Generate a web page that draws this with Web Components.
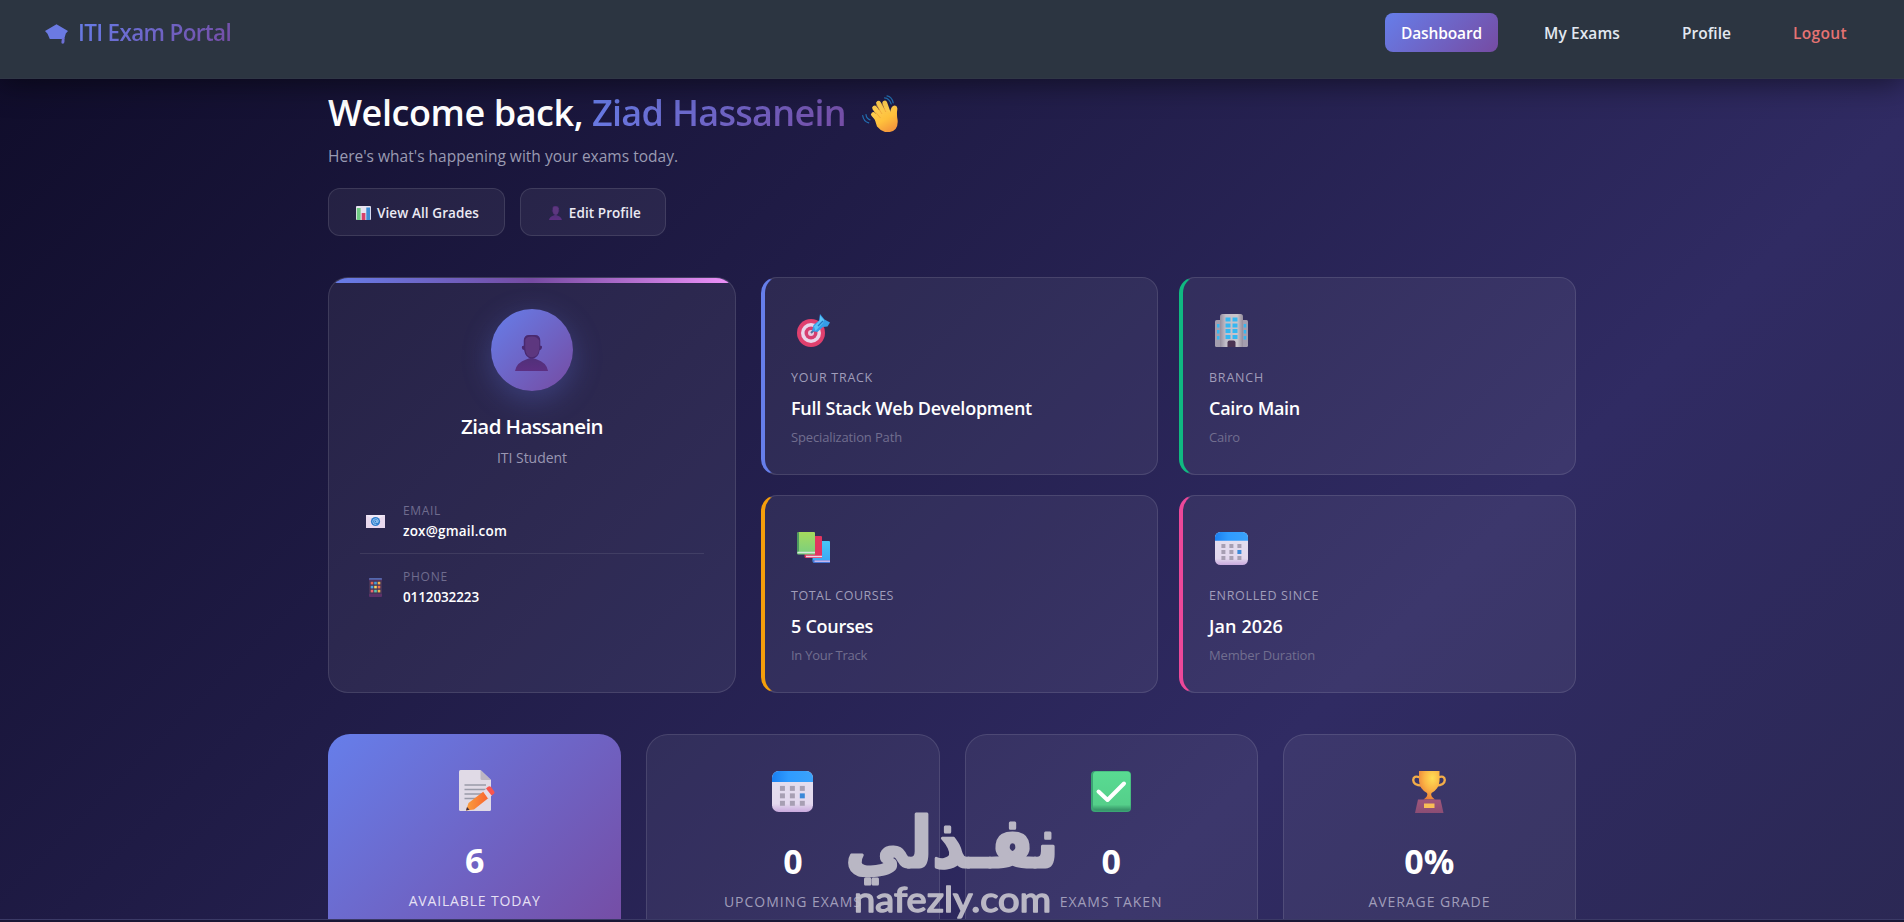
<!DOCTYPE html>
<html lang="en">
<head>
<meta charset="UTF-8">
<title>ITI Exam Portal</title>
<style>
    * { box-sizing: border-box; }
    body {
        margin: 0;
        height: 922px;
        overflow: hidden;
        display: flex;
        flex-direction: column;
        font-family: 'Open Sans', 'Noto Sans', sans-serif;
        color: #fff;
        background: linear-gradient(135deg, #0f0c29 0%, #302b63 50%, #24243e 100%) 0 0 / 1904px 2150px no-repeat;
    }
</style>
</head>
<body>

<nav-bar>
    <span slot="brand"><fit-text width="153">ITI Exam Portal</fit-text></span>
    <nav-link active><fit-text width="81">Dashboard</fit-text></nav-link>
    <nav-link><fit-text width="76">My Exams</fit-text></nav-link>
    <nav-link><fit-text width="49">Profile</fit-text></nav-link>
    <nav-link danger><fit-text width="54">Logout</fit-text></nav-link>
</nav-bar>

<dashboard-page>
    <welcome-header slot="header">
        <fit-text width="264" slot="greeting">Welcome back,&nbsp;</fit-text>
        <fit-text width="254" slot="name">Ziad Hassanein</fit-text>
        <fit-text width="350" slot="subtitle">Here's what's happening with your exams today.</fit-text>
        <action-button slot="actions" icon="chart"><fit-text width="102">View All Grades</fit-text></action-button>
        <action-button slot="actions" icon="user"><fit-text width="72">Edit Profile</fit-text></action-button>
    </welcome-header>

    <profile-card slot="profile">
        <fit-text width="142" slot="name">Ziad Hassanein</fit-text>
        <fit-text width="70" slot="role">ITI Student</fit-text>
        <contact-row icon="email">
            <fit-text width="38" slot="label">EMAIL</fit-text>
            <fit-text width="104" slot="value">zox@gmail.com</fit-text>
        </contact-row>
        <contact-row icon="phone">
            <fit-text width="45" slot="label">PHONE</fit-text>
            <fit-text width="76" slot="value">0112032223</fit-text>
        </contact-row>
    </profile-card>

    <info-card slot="info" icon="target" style="--accent: #667eea">
        <fit-text width="82" slot="label">YOUR TRACK</fit-text>
        <fit-text width="241" slot="value">Full Stack Web Development</fit-text>
        <fit-text width="111" slot="note">Specialization Path</fit-text>
    </info-card>
    <info-card slot="info" icon="building" style="--accent: #10b981">
        <fit-text width="55" slot="label">BRANCH</fit-text>
        <fit-text width="91" slot="value">Cairo Main</fit-text>
        <fit-text width="31" slot="note">Cairo</fit-text>
    </info-card>
    <info-card slot="info" icon="books" style="--accent: #f59e0b">
        <fit-text width="103" slot="label">TOTAL COURSES</fit-text>
        <fit-text width="82" slot="value">5 Courses</fit-text>
        <fit-text width="76" slot="note">In Your Track</fit-text>
    </info-card>
    <info-card slot="info" icon="calendar" style="--accent: #ec4899">
        <fit-text width="110" slot="label">ENROLLED SINCE</fit-text>
        <fit-text width="74" slot="value">Jan 2026</fit-text>
        <fit-text width="106" slot="note">Member Duration</fit-text>
    </info-card>

    <stat-card slot="stats" icon="memo" primary>
        <span slot="number">6</span>
        <fit-text width="132" slot="label">AVAILABLE TODAY</fit-text>
    </stat-card>
    <stat-card slot="stats" icon="calendar">
        <span slot="number">0</span>
        <fit-text width="138" slot="label">UPCOMING EXAMS</fit-text>
    </stat-card>
    <stat-card slot="stats" icon="check">
        <span slot="number">0</span>
        <fit-text width="103" slot="label">EXAMS TAKEN</fit-text>
    </stat-card>
    <stat-card slot="stats" icon="trophy">
        <span slot="number">0%</span>
        <fit-text width="122" slot="label">AVERAGE GRADE</fit-text>
    </stat-card>
</dashboard-page>

<page-edge></page-edge>
<site-watermark></site-watermark>

<script>
const calendarArt = `
    <defs>
        <linearGradient id="top"><stop stop-color="#1a7ff0"/><stop offset=".4" stop-color="#2f9bff"/><stop offset="1" stop-color="#3ba2fb"/></linearGradient>
        <linearGradient id="page" x2="0" y2="1"><stop stop-color="#e4e0ee"/><stop offset=".8" stop-color="#e3d8ee"/><stop offset="1" stop-color="#c9a9dd"/></linearGradient>
    </defs>
    <rect width="33" height="33" rx="5.5" fill="url(#page)"/>
    <path d="M0 8.800V5.500A5.500 5.500 0 0 1 5.500 0h22A5.500 5.500 0 0 1 33 5.500v3.300z" fill="url(#top)"/>
    <g fill="#a79fb3">
        <rect x="6.400" y="12" width="4" height="4"/><rect x="14.400" y="12" width="4" height="4"/><rect x="22.400" y="12" width="4" height="4"/>
        <rect x="6.400" y="18" width="4" height="4"/><rect x="14.400" y="18" width="4" height="4"/><rect x="22.400" y="18" width="4" height="4" fill="#3b88d8"/>
        <rect x="6.400" y="24" width="4" height="4"/><rect x="14.400" y="24" width="4" height="4"/><rect x="22.400" y="24" width="4" height="4"/>
    </g>`;

// name -> [viewBox width, viewBox height, markup]
const icons = {
    cap: [23, 20, `
        <path d="M11.500 0.200L23 7l-2.200 2.600L19.200 15H4.800L2.500 9.800 0 7z" fill="#6b7ae2"/>
        <path d="M17 14h2.500v3.500q0 2.300-1.900 2.300-1.500 0-1.200-1.700z" fill="#6d6fd4"/>`],
    wave: [36, 37, `
        <defs><linearGradient id="skin" x2=".5" y2="1"><stop stop-color="#ffd45a"/><stop offset=".6" stop-color="#ffc13c"/><stop offset="1" stop-color="#f59a3c"/></linearGradient></defs>
        <g fill="none" stroke="#2271b4" stroke-width="1.200" stroke-linecap="round">
            <path d="M22.500 2.800q5 .5 6.700 6.200M25 .8q5 1 6.200 7M.7 20.500q.8 6 6 7.300M4 19.500q.4 4 4 5.400"/>
        </g>
        <g stroke="#ffcd4e" stroke-width="4.800" stroke-linecap="round" fill="none">
            <path d="M23 20L16.500 8.200"/><path d="M26 17L22.800 8"/><path d="M20 23L12.600 13"/><path d="M19 28L11.400 19.500"/>
        </g>
        <path d="M12 22L20 12l8 5.500q1.200-7.300 5-6.900 2.800.4 2.300 4-.8 5 .3 10.500 1 11-9.600 12.200-6 .2-11-5.800z" fill="url(#skin)"/>
        <path d="M14.500 10l5.500 9M19.800 8.500l4 8.500M13.500 17l5 6" stroke="#ed9b35" stroke-width=".6" fill="none"/>`],
    chart: [15, 14, `
        <rect width="15" height="14" rx="1" fill="#e8e3f1"/>
        <rect x=".8" y="2" width="3.800" height="12" fill="#6fca83"/><rect x="5.700" y="7" width="3.700" height="7" fill="#d5416c"/><rect x="10.300" y="1.500" width="3.800" height="12.500" fill="#3d8dd5"/>`],
    user: [34, 37, `
        <defs><linearGradient id="bust" x2="0" y2="1"><stop stop-color="#503079"/><stop offset="1" stop-color="#5d2f82"/></linearGradient></defs>
        <path d="M0 37Q1.500 28 12 24.800L17 23l5 1.800Q32.500 28 34 37z" fill="url(#bust)"/>
        <path d="M9 6Q9 0 14.500 0h6Q26 0 26 6v5q2.500-.5 1.500 2.500-.7 2-2 1.800Q24 24 17.400 24T9.300 15.300q-1.800 0-2.100-1.800Q6.500 10.800 9 11z" fill="#49296f"/>
        <path d="M10.500 5Q12 1.500 17.500 1.600T25 6v7q-.6 9.500-7.500 9.800-6.500 0-7-9.300z" fill="#5d377f"/>`],
    email: [19, 13, `
        <rect width="19" height="13" fill="#e9d9ee"/><path d="M0 0l9.500 6L19 0" fill="#f0e8f6"/>
        <circle cx="9.500" cy="6.500" r="4.600" fill="#2e7ecb"/>
        <path d="M11 5.200v1.900q.2 1 1 .3 1-3.300-2.300-3.700-3 .2-3 3 .2 3 3.600 2.800" fill="none" stroke="#bfe1ff" stroke-width=".7"/><circle cx="9.600" cy="6.500" r="1.200" fill="none" stroke="#bfe1ff" stroke-width=".7"/>`],
    phone: [13, 19, `
        <rect width="13" height="19" rx="1" fill="#5c3168"/><rect y="2.500" width="13" height="13.500" fill="#463457"/><rect width="13" height="1.800" rx=".9" fill="#5368ae"/>
        <rect x="1.700" y="3.800" width="2.600" height="2.600" fill="#e46552"/><rect x="5.200" y="3.800" width="2.600" height="2.600" fill="#439ed8"/><rect x="8.700" y="3.800" width="2.600" height="2.600" fill="#f3b54a"/>
        <rect x="1.700" y="7.800" width="2.600" height="2.600" fill="#4fa5e1"/><rect x="5.200" y="7.800" width="2.600" height="2.600" fill="#f5d75e"/><rect x="8.700" y="7.800" width="2.600" height="2.600" fill="#ed744c"/>
        <rect x="1.700" y="11.800" width="2.600" height="2.600" fill="#ed696d"/><rect x="5.200" y="11.800" width="2.600" height="2.600" fill="#5ac6ab"/><rect x="8.700" y="11.800" width="2.600" height="2.600" fill="#f3b54a"/>`],
    target: [33, 33, `
        <circle cx="14" cy="19" r="14" fill="#e0406e"/><circle cx="14" cy="19" r="10" fill="#ead5ea"/><circle cx="14" cy="19" r="6.500" fill="#d63e70"/><circle cx="14" cy="19" r="3" fill="#e6c9df"/>
        <path d="M14 19L20 13" stroke="#506d9c" stroke-width="2"/>
        <path d="M15 17l1.500-6L22 6.500 23 0 27.500 5.500 33 8.500 30.500 12.500 26 13 20.500 18z" fill="#359ee8"/>
        <path d="M17 12.500L23 6V1.500L27 6l-1 3-7.500 8z" fill="#5bc4f7"/><path d="M21 12L26 7" stroke="#2275c3" stroke-width="1.300"/>`],
    building: [33, 33, `
        <defs><linearGradient id="wall"><stop stop-color="#958e9e"/><stop offset=".25" stop-color="#c2bec8"/><stop offset=".75" stop-color="#c9c4ca"/><stop offset="1" stop-color="#958d9c"/></linearGradient></defs>
        <rect y="6" width="33" height="27" rx="1.500" fill="#a49eae"/><path d="M5 33V2.500Q5 0 7.500 0h18Q28 0 28 2.500V33z" fill="url(#wall)"/>
        <g fill="#35b7f1">
            <rect x="10.500" y="3.500" width="5" height="4"/><rect x="17.500" y="3.500" width="5" height="4"/><rect x="10.500" y="9.500" width="5" height="4"/><rect x="17.500" y="9.500" width="5" height="4"/>
            <rect x="10.500" y="15" width="5" height="4"/><rect x="17.500" y="15" width="5" height="4"/><rect x="10.500" y="21" width="5" height="4"/><rect x="17.500" y="21" width="5" height="4"/>
            <rect x="2" y="10" width="2.500" height="3.500"/><rect x="2" y="16" width="2.500" height="3.500"/><rect x="2" y="22" width="2.500" height="3.500"/>
            <rect x="28.700" y="10" width="2.500" height="3.500"/><rect x="28.700" y="16" width="2.500" height="3.500"/><rect x="28.700" y="22" width="2.500" height="3.500"/>
        </g>
        <path d="M12.500 33v-4.500q0-2 2-2h4q2 0 2 2V33z" fill="#4a3352"/>`],
    books: [33, 33, `
        <defs>
            <linearGradient id="green" x2="0" y2="1"><stop stop-color="#a5d95d"/><stop offset="1" stop-color="#79cf80"/></linearGradient>
            <linearGradient id="blue" x2="0" y2="1"><stop stop-color="#48c6f5"/><stop offset="1" stop-color="#3aa5f4"/></linearGradient>
        </defs>
        <path d="M16 9h16q1 0 1 1v20.500H17q-1.500 0-1.500-1.500z" fill="url(#blue)"/><path d="M16 28h17v3H17.500q-1.500 0-1.500-1.500z" fill="#4677d8"/><path d="M17.500 29.200H33" stroke="#cbbcf0" stroke-width="1.500"/>
        <path d="M8 4h16q1 0 1 1v21H9q-1.500 0-1.500-1.500z" fill="#e2355f"/><path d="M9 24.500H25" stroke="#efd4ea" stroke-width="1.500"/>
        <path d="M2 0h15q1 0 1 1v21.500H1.500Q0 22.500 0 21V2q0-2 2-2z" fill="url(#green)"/><path d="M0 2q0-2 2-2v19.500q-1.500 0-2 1.500z" fill="#4d9a5f"/><path d="M.5 20.500H18" stroke="#d5e6dd" stroke-width="1.500"/>`],
    calendar: [33, 33, calendarArt],
    memo: [36, 41, `
        <defs><linearGradient id="pencil" x2="1"><stop stop-color="#f9a040"/><stop offset="1" stop-color="#f9632e"/></linearGradient></defs>
        <path d="M1.500 0H21.500L32 10v29.500q0 1.500-1.500 1.500h-29Q0 41 0 39.500v-38Q0 0 1.500 0z" fill="#e0dae6"/>
        <path d="M21.500 0L32 10H23q-1.500 0-1.500-1.500z" fill="#bcb5c2"/>
        <path d="M5.500 15H27M5.500 19.500H27M5.500 24H23M5.500 28.500H18" stroke="#999aa8" stroke-width="1.300"/>
        <path d="M7 40.500L9.500 33 24.500 21.500 29.500 28 15 39.500z" fill="url(#pencil)"/><path d="M7 40.500l1-3.500 2.500 2.800z" fill="#413044"/>
        <path d="M24 21.500l3.500-3 5.500 7-4 3z" fill="#e6dce7"/><path d="M27 18.500l2-1.800q1.800-1.200 3.200.5l2.900 4q1 1.600-.4 2.700L32.500 25.500z" fill="#f8554f"/>`],
    check: [40, 41, `
        <defs><linearGradient id="tile" x2="0" y2="1"><stop stop-color="#59db92"/><stop offset=".85" stop-color="#55cf8a"/><stop offset="1" stop-color="#348f66"/></linearGradient></defs>
        <rect width="40" height="41" rx="4" fill="#3ba574"/><rect x="2" y=".5" width="37.500" height="39" rx="3.500" fill="url(#tile)"/>
        <path d="M7.500 20.500L16.500 29 33 12.500" fill="none" stroke="#fff" stroke-width="4" stroke-linecap="round" stroke-linejoin="round"/>`],
    trophy: [34, 42, `
        <defs>
            <radialGradient id="gold" cx=".65" cy=".25" r=".8"><stop stop-color="#ffdf55"/><stop offset=".5" stop-color="#fbb445"/><stop offset="1" stop-color="#e87b3a"/></radialGradient>
            <linearGradient id="base" x2="0" y2="1"><stop stop-color="#a0567a"/><stop offset="1" stop-color="#8b4d74"/></linearGradient>
        </defs>
        <path d="M8 6.500Q1.500 4 1.200 9q.3 5.500 8.800 5.500M26 6.500Q32.500 4 32.800 9q-.3 5.500-8.800 5.500" fill="none" stroke="#f3ad49" stroke-width="2.400"/>
        <path d="M7 0h20.500v10q-.5 8-8 12-1.500 3 3.500 6.500H11.500Q16.500 25 15 22 7.500 18 7 10z" fill="url(#gold)"/>
        <path d="M6 28.500h22.500L31.500 42H3z" fill="url(#base)"/><rect x="12" y="32.500" width="10.500" height="4.500" fill="#f9bd56"/>`],
};

class PortalIcon extends HTMLElement {
    constructor() {
        super();
        const shadow = this.attachShadow({ mode: 'open' });
        const [w, h, art] = icons[this.getAttribute('name')];
        const height = Number(this.getAttribute('height')) || h;
        shadow.innerHTML = `
            <style>
                :host { display: inline-block; line-height: 0; }
            </style>
            <svg width="${w * height / h}" height="${height}" viewBox="0 0 ${w} ${h}">${art}</svg>
        `;
    }
}

class NavBar extends HTMLElement {
    constructor() {
        super();
        const shadow = this.attachShadow({ mode: 'open' });
        shadow.innerHTML = `
            <style>
                :host {
                    display: flex;
                    justify-content: space-between;
                    align-items: flex-start;
                    box-sizing: border-box;
                    height: 79px;
                    flex: none;
                    padding: 13px 41px 0 45px;
                    background: #2c3541;
                    box-shadow: 0 4px 30px rgba(0, 0, 0, 0.5);
                    border-bottom: 1px solid #303746;
                    z-index: 1;
                }
                .brand {
                    display: flex;
                    align-items: center;
                    gap: 10px;
                    height: 39px;
                }
                portal-icon { margin-top: 3px; }
                .title {
                    font-size: 22.5px;
                    font-weight: 600;
                    line-height: 34px;
                    background: linear-gradient(135deg, #667eea, #764ba2);
                    background-clip: text;
                    -webkit-background-clip: text;
                    color: transparent;
                }
                .links { display: flex; gap: 30px; }
            </style>
            <div class="brand">
                <portal-icon name="cap"></portal-icon>
                <div class="title"><slot name="brand"></slot></div>
            </div>
            <div class="links"><slot></slot></div>
        `;
    }
}

class NavLink extends HTMLElement {
    constructor() {
        super();
        const shadow = this.attachShadow({ mode: 'open' });
        shadow.innerHTML = `
            <style>
                :host {
                    display: block;
                    box-sizing: border-box;
                    height: 39px;
                    padding: 1px 16px 0;
                    font-size: 15.5px;
                    font-weight: 600;
                    line-height: 38px;
                    color: #e2e8f0;
                    border-radius: 8px;
                }
                :host([active]) {
                    color: #fff;
                    background: linear-gradient(135deg, #667eea, #764ba2);
                }
                :host([danger]) { color: #e57373; }
            </style>
            <slot></slot>
        `;
    }
}

class DashboardPage extends HTMLElement {
    constructor() {
        super();
        const shadow = this.attachShadow({ mode: 'open' });
        shadow.innerHTML = `
            <style>
                :host {
                    display: flex;
                    flex-direction: column;
                    gap: 41px;
                    box-sizing: border-box;
                    width: 1248px;
                    height: 840px;
                    flex: none;
                    margin: 0 auto;
                    padding-top: 10px;
                    overflow: hidden;
                }
                .overview {
                    display: grid;
                    grid-template-columns: 408px 1fr;
                    gap: 25px;
                    height: 416px;
                    flex: none;
                }
                .info {
                    display: grid;
                    grid-template-columns: 1fr 1fr;
                    grid-template-rows: 1fr 1fr;
                    gap: 20px 21px;
                }
                .stats {
                    display: grid;
                    grid-template-columns: repeat(4, 1fr);
                    gap: 25px;
                    flex: none;
                }
            </style>
            <slot name="header"></slot>
            <div class="overview">
                <slot name="profile"></slot>
                <div class="info"><slot name="info"></slot></div>
            </div>
            <div class="stats"><slot name="stats"></slot></div>
        `;
    }
}

class WelcomeHeader extends HTMLElement {
    constructor() {
        super();
        const shadow = this.attachShadow({ mode: 'open' });
        shadow.innerHTML = `
            <style>
                :host { display: block; flex: none; }
                h1 {
                    display: flex;
                    margin: 0 0 7px;
                    font-size: 36px;
                    font-weight: 600;
                    line-height: 48px;
                }
                .name {
                    background: linear-gradient(135deg, #667eea, #764ba2);
                    background-clip: text;
                    -webkit-background-clip: text;
                    color: transparent;
                }
                h1 portal-icon { margin: 6px 0 0 16px; }
                p {
                    margin: 0 0 20px;
                    font-size: 15.5px;
                    line-height: 24px;
                    color: #9a9bb2;
                }
                .actions { display: flex; gap: 15px; }
            </style>
            <h1><slot name="greeting"></slot><span class="name"><slot name="name"></slot></span><portal-icon name="wave"></portal-icon></h1>
            <p><slot name="subtitle"></slot></p>
            <div class="actions"><slot name="actions"></slot></div>
        `;
    }
}

class ActionButton extends HTMLElement {
    constructor() {
        super();
        const shadow = this.attachShadow({ mode: 'open' });
        shadow.innerHTML = `
            <style>
                :host {
                    display: flex;
                    align-items: center;
                    gap: 6px;
                    box-sizing: border-box;
                    height: 48px;
                    padding: 1px 25px 0 27px;
                    font-size: 13.5px;
                    font-weight: 600;
                    line-height: 46px;
                    color: #eceaf3;
                    background: rgba(255, 255, 255, 0.06);
                    border: 1px solid rgba(255, 255, 255, 0.11);
                    border-radius: 12px;
                }
                :host([icon="user"]) { gap: 7px; padding-left: 28px; padding-right: 24px; }
            </style>
            <portal-icon name="${this.getAttribute('icon')}" height="14"></portal-icon>
            <slot></slot>
        `;
    }
}

class ProfileCard extends HTMLElement {
    constructor() {
        super();
        const shadow = this.attachShadow({ mode: 'open' });
        shadow.innerHTML = `
            <style>
                :host {
                    display: block;
                    position: relative;
                    box-sizing: border-box;
                    padding: 31px;
                    text-align: center;
                    overflow: hidden;
                    background: rgba(255, 255, 255, 0.06);
                    border: 1px solid rgba(255, 255, 255, 0.11);
                    border-radius: 20px;
                }
                :host::before {
                    content: '';
                    position: absolute;
                    inset: 0 0 auto 0;
                    height: 5px;
                    background: linear-gradient(90deg, #667eea, #764ba2, #f093fb);
                }
                .avatar {
                    display: flex;
                    align-items: center;
                    justify-content: center;
                    box-sizing: border-box;
                    width: 82px;
                    height: 82px;
                    margin: 0 auto 21px;
                    padding-top: 6px;
                    border-radius: 50%;
                    background: linear-gradient(135deg, #667eea, #764ba2);
                    box-shadow: 0 8px 30px rgba(102, 126, 234, 0.3);
                }
                .name {
                    font-size: 20.5px;
                    font-weight: 600;
                    line-height: 28px;
                }
                .role {
                    margin: 8px 0 20px;
                    font-size: 14px;
                    line-height: 20px;
                    color: #9a97b2;
                }
            </style>
            <div class="avatar"><portal-icon name="user" height="36"></portal-icon></div>
            <div class="name"><slot name="name"></slot></div>
            <div class="role"><slot name="role"></slot></div>
            <slot></slot>
        `;
    }
}

class ContactRow extends HTMLElement {
    constructor() {
        super();
        const shadow = this.attachShadow({ mode: 'open' });
        shadow.innerHTML = `
            <style>
                :host {
                    display: grid;
                    grid-template-columns: 31px 1fr;
                    gap: 12px;
                    align-items: center;
                    padding: 14px 0 12px;
                    text-align: left;
                    border-bottom: 1px solid rgba(255, 255, 255, 0.09);
                }
                :host(:last-child) { border-bottom: none; }
                portal-icon { justify-self: center; }
                .label {
                    margin-bottom: 1px;
                    font-size: 12px;
                    line-height: 18px;
                    color: #6f6c8e;
                }
                .value {
                    font-size: 13.5px;
                    font-weight: 600;
                    line-height: 20px;
                }
            </style>
            <portal-icon name="${this.getAttribute('icon')}"></portal-icon>
            <div>
                <div class="label"><slot name="label"></slot></div>
                <div class="value"><slot name="value"></slot></div>
            </div>
        `;
    }
}

class InfoCard extends HTMLElement {
    constructor() {
        super();
        const shadow = this.attachShadow({ mode: 'open' });
        shadow.innerHTML = `
            <style>
                :host {
                    display: block;
                    box-sizing: border-box;
                    padding: 36px 25px 0 26px;
                    background: rgba(255, 255, 255, 0.06);
                    border: 1px solid rgba(255, 255, 255, 0.11);
                    border-left: 4px solid var(--accent);
                    border-radius: 16px;
                }
                portal-icon {
                    display: block;
                    height: 34px;
                    margin: 0 0 20px 6px;
                }
                .label {
                    font-size: 12.5px;
                    line-height: 20px;
                    color: #a09dba;
                }
                .value {
                    margin: 7px 0 6px;
                    font-size: 18px;
                    font-weight: 600;
                    line-height: 26px;
                }
                .note {
                    font-size: 13px;
                    line-height: 20px;
                    color: #716e8f;
                }
            </style>
            <portal-icon name="${this.getAttribute('icon')}"></portal-icon>
            <div class="label"><slot name="label"></slot></div>
            <div class="value"><slot name="value"></slot></div>
            <div class="note"><slot name="note"></slot></div>
        `;
    }
}

class StatCard extends HTMLElement {
    constructor() {
        super();
        const shadow = this.attachShadow({ mode: 'open' });
        shadow.innerHTML = `
            <style>
                :host {
                    display: block;
                    box-sizing: border-box;
                    height: 212px;
                    padding-top: 36px;
                    text-align: center;
                    background: rgba(255, 255, 255, 0.06);
                    border: 1px solid rgba(255, 255, 255, 0.11);
                    border-radius: 22px;
                    color: #fff;
                    --label: #a09dba;
                }
                :host([primary]) {
                    background: linear-gradient(135deg, #667eea, #764ba2);
                    border: none;
                    --label: #e6e0f4;
                }
                portal-icon { display: block; height: 42px; }
                :host([primary]) portal-icon { padding-left: 4px; }
                .number {
                    margin: 26px 0 9px;
                    font-size: 34px;
                    font-weight: 700;
                    line-height: 44px;
                }
                .label {
                    font-size: 14px;
                    line-height: 20px;
                    color: var(--label);
                }
            </style>
            <portal-icon name="${this.getAttribute('icon')}" height="${this.getAttribute('icon') === 'trophy' ? 42 : 41}"></portal-icon>
            <div class="number"><slot name="number"></slot></div>
            <div class="label"><slot name="label"></slot></div>
        `;
    }
}

class PageEdge extends HTMLElement {
    constructor() {
        super();
        const shadow = this.attachShadow({ mode: 'open' });
        shadow.innerHTML = `
            <style>
                :host {
                    display: block;
                    box-sizing: border-box;
                    height: 3px;
                    flex: none;
                    background: #191735;
                    border-top: 1px solid #3b3a66;
                }
            </style>
        `;
    }
}

class SiteWatermark extends HTMLElement {
    constructor() {
        super();
        const shadow = this.attachShadow({ mode: 'open' });
        shadow.innerHTML = `
            <style>
                :host {
                    position: absolute;
                    left: 832px;
                    top: 762px;
                    z-index: 2;
                    line-height: 0;
                    opacity: 0.92;
                }
                text { fill: #c5c3cd; stroke: #c5c3cd; stroke-linejoin: round; }
                .ar { font: bold 70px 'DejaVu Sans', sans-serif; stroke-width: 3; }
                .en { font: 400 35px Lato, sans-serif; stroke-width: 1.5; }
            </style>
            <svg width="240" height="160">
                <text class="ar" x="120" y="105" text-anchor="middle" textLength="213" lengthAdjust="spacingAndGlyphs">نفـذلي</text>
                <text class="en" x="22" y="150" textLength="197" lengthAdjust="spacingAndGlyphs">nafezly.com</text>
            </svg>
        `;
    }
}

// Tracks its text so that it runs to the given width in px.
class FitText extends HTMLElement {
    constructor() {
        super();
        const shadow = this.attachShadow({ mode: 'open' });
        shadow.innerHTML = `
            <style>
                :host { display: inline; white-space: nowrap; }
            </style>
            <span><slot></slot></span>
        `;
    }
    connectedCallback() {
        const span = this.shadowRoot.querySelector('span');
        const spare = this.getAttribute('width') - span.getBoundingClientRect().width;
        this.style.letterSpacing = (spare / this.textContent.length) + 'px';
    }
}

customElements.define('portal-icon', PortalIcon)
customElements.define('nav-bar', NavBar)
customElements.define('nav-link', NavLink)
customElements.define('dashboard-page', DashboardPage)
customElements.define('welcome-header', WelcomeHeader)
customElements.define('action-button', ActionButton)
customElements.define('profile-card', ProfileCard)
customElements.define('contact-row', ContactRow)
customElements.define('info-card', InfoCard)
customElements.define('stat-card', StatCard)
customElements.define('page-edge', PageEdge)
customElements.define('site-watermark', SiteWatermark)
// last: it measures text laid out by the elements above
customElements.define('fit-text', FitText)
</script>
</body>
</html>
